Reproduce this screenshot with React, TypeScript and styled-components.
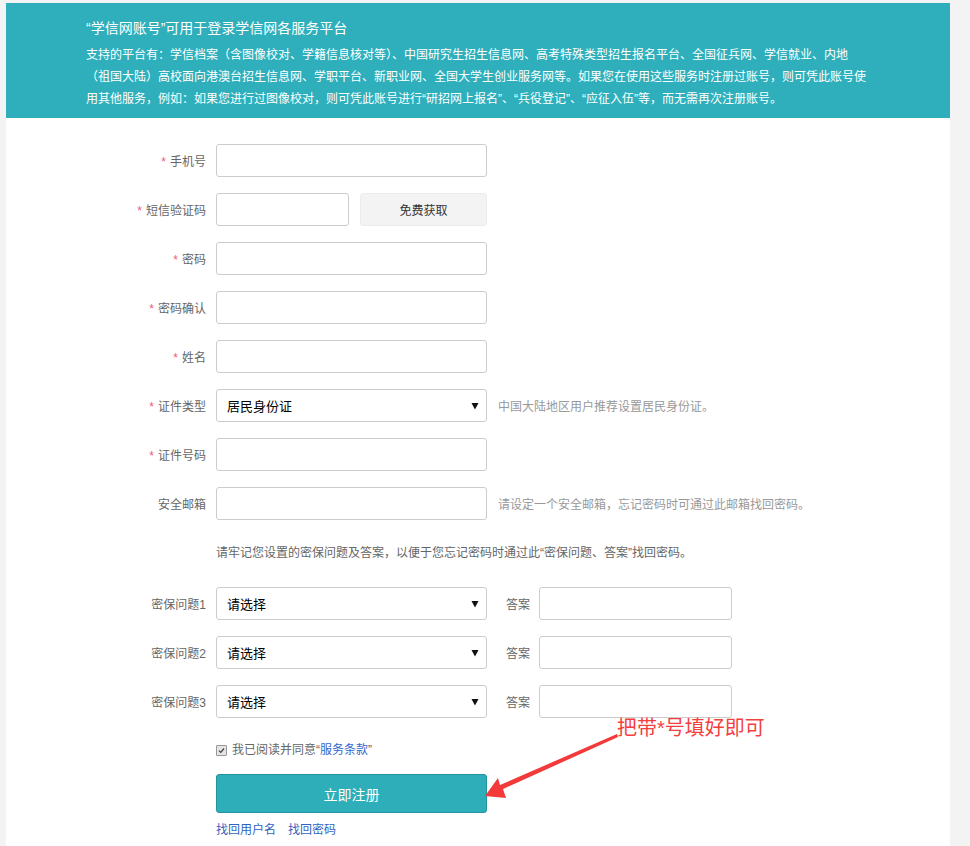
import { FC } from 'react';
import styled, { createGlobalStyle } from 'styled-components';

const GlobalStyle = createGlobalStyle`
	body {
		margin: 0;
		background: #f3f3f3;
		font-family: 'Liberation Sans', 'Microsoft YaHei', 'Noto Sans CJK SC', sans-serif;
	}
`;

const Page = styled.div`
	padding: 3px 20px 0 6px;
`;

const Panel = styled.div`
	position: relative;
	background: #fff;
	min-height: 860px;
`;

const Banner = styled.div`
	background: #2eafbb;
	color: #fff;
	padding: 15px 80px 8px;

	h3 {
		margin: 0;
		font-size: 14px;
		line-height: 20px;
		font-weight: normal;
	}

	p {
		margin: 6px 0 0;
		font-size: 12px;
		line-height: 22px;
	}
`;

const Form = styled.div`
	display: flex;
	flex-direction: column;
	padding-top: 26px;
	font-size: 12px;
	color: #666;
`;

const Row = styled.div`
	display: flex;
	align-items: center;
	height: 33px;
	margin-bottom: 16px;
`;

const Label = styled.label`
	width: 210px;
	padding-right: 10px;
	box-sizing: border-box;
	text-align: right;
	color: #666;

	.star {
		color: #f2577c;
		margin-right: 4px;
	}
`;

const Input = styled.input<{ $w?: number }>`
	width: ${({ $w }) => $w ?? 271}px;
	height: 33px;
	box-sizing: border-box;
	border: 1px solid #ccc;
	border-radius: 3px;
	background: #fff;
	outline: none;
	padding: 0 10px;
	font: inherit;
`;

const SendButton = styled.button`
	margin-left: 11px;
	width: 127px;
	height: 33px;
	border: 1px solid #ececec;
	border-radius: 3px;
	background: #f3f3f3;
	color: #333;
	font: inherit;
	font-size: 12px;
`;

const SelectBox = styled.div`
	display: flex;
	align-items: center;
	justify-content: space-between;
	width: 271px;
	height: 33px;
	box-sizing: border-box;
	border: 1px solid #ccc;
	border-radius: 3px;
	padding: 0 7px 0 10px;
	color: #000;
	font-size: 13px;
`;

const Hint = styled.span`
	margin-left: 11px;
	color: #999;
	font-size: 12px;
`;

const Notice = styled.div`
	padding-left: 210px;
	margin: 7px 0 24px;
	line-height: 20px;
	color: #666;
`;

const AnswerLabel = styled.span`
	margin: 0 9px 0 19px;
	color: #666;
`;

const Agree = styled.div`
	display: flex;
	align-items: center;
	padding-left: 210px;
	line-height: 20px;
	margin-top: 6px;
	color: #666;

	a {
		color: #3366cc;
		text-decoration: none;
	}
`;

const Check = styled.span`
	display: inline-flex;
	align-items: center;
	justify-content: center;
	width: 9px;
	height: 9px;
	border: 1px solid #999;
	border-radius: 1px;
	background: #e4e4e4;
	margin-right: 5px;
`;

const Submit = styled.button`
	margin: 14px 0 0 210px;
	width: 271px;
	height: 39px;
	border: 1px solid #23949f;
	border-radius: 3px;
	background: #2eaeb9;
	color: #fff;
	font: inherit;
	font-size: 14px;
`;

const Links = styled.div`
	display: flex;
	gap: 12px;
	padding-left: 210px;
	margin-top: 7px;
	line-height: 20px;

	a {
		color: #2f63c0;
		text-decoration: none;
	}
`;

const Note = styled.div`
	position: absolute;
	left: 611px;
	top: 711px;
	font-size: 20px;
	line-height: 28px;
	color: #f43f3f;
`;

const Arrow = styled.svg`
	position: absolute;
	left: 472px;
	top: 707px;
`;

const fields = [
	{ label: '手机号', required: true },
	{ label: '短信验证码', required: true, sms: true },
	{ label: '密码', required: true },
	{ label: '密码确认', required: true },
	{ label: '姓名', required: true },
	{ label: '证件类型', required: true, select: '居民身份证', hint: '中国大陆地区用户推荐设置居民身份证。' },
	{ label: '证件号码', required: true },
	{ label: '安全邮箱', required: false, hint: '请设定一个安全邮箱，忘记密码时可通过此邮箱找回密码。' },
];

const Caret: FC = () => (
	<svg width='8' height='8' viewBox='0 0 8 8'>
		<polygon points='0.5,1 7.5,1 4,7.5' fill='#111' />
	</svg>
);

const App: FC = () => {
	return (
		<Page>
			<GlobalStyle />
			<Panel>
				<Banner>
					<h3>“学信网账号”可用于登录学信网各服务平台</h3>
					<p>
						支持的平台有：学信档案（含图像校对、学籍信息核对等）、中国研究生招生信息网、高考特殊类型招生报名平台、全国征兵网、学信就业、内地（祖国大陆）高校面向港澳台招生信息网、学职平台、新职业网、全国大学生创业服务网等。如果您在使用这些服务时注册过账号，则可凭此账号使用其他服务，例如：如果您进行过图像校对，则可凭此账号进行“研招网上报名”、“兵役登记”、“应征入伍”等，而无需再次注册账号。
					</p>
				</Banner>
				<Form>
					{fields.map((f) => (
						<Row key={f.label}>
							<Label>
								{f.required && <span className='star'>*</span>}
								{f.label}
							</Label>
							{f.select ? (
								<SelectBox>
									<span>{f.select}</span>
									<Caret />
								</SelectBox>
							) : (
								<Input $w={f.sms ? 133 : 271} />
							)}
							{f.sms && <SendButton>免费获取</SendButton>}
							{f.hint && <Hint>{f.hint}</Hint>}
						</Row>
					))}
					<Notice>请牢记您设置的密保问题及答案，以便于您忘记密码时通过此“密保问题、答案”找回密码。</Notice>
					{[1, 2, 3].map((n) => (
						<Row key={n}>
							<Label>密保问题{n}</Label>
							<SelectBox>
								<span>请选择</span>
								<Caret />
							</SelectBox>
							<AnswerLabel>答案</AnswerLabel>
							<Input $w={193} />
						</Row>
					))}
					<Agree>
						<Check>
							<svg width='7' height='7' viewBox='0 0 7 7'>
								<path d='M1 3.6 L2.8 5.4 L6 1.5' stroke='#444' strokeWidth='1.3' fill='none' />
							</svg>
						</Check>
						我已阅读并同意“<a href='#'>服务条款</a>”
					</Agree>
					<Submit>立即注册</Submit>
					<Links>
						<a href='#'>找回用户名</a>
						<a href='#'>找回密码</a>
					</Links>
				</Form>
				<Note>把带*号填好即可</Note>
				<Arrow width='150' height='100' viewBox='0 0 150 100'>
					<polygon
						points='7,86 20,68 22,75 139,24 140,27 25,79 28,88'
						fill='#f33a3a'
					/>
				</Arrow>
			</Panel>
		</Page>
	);
};

export default App;
